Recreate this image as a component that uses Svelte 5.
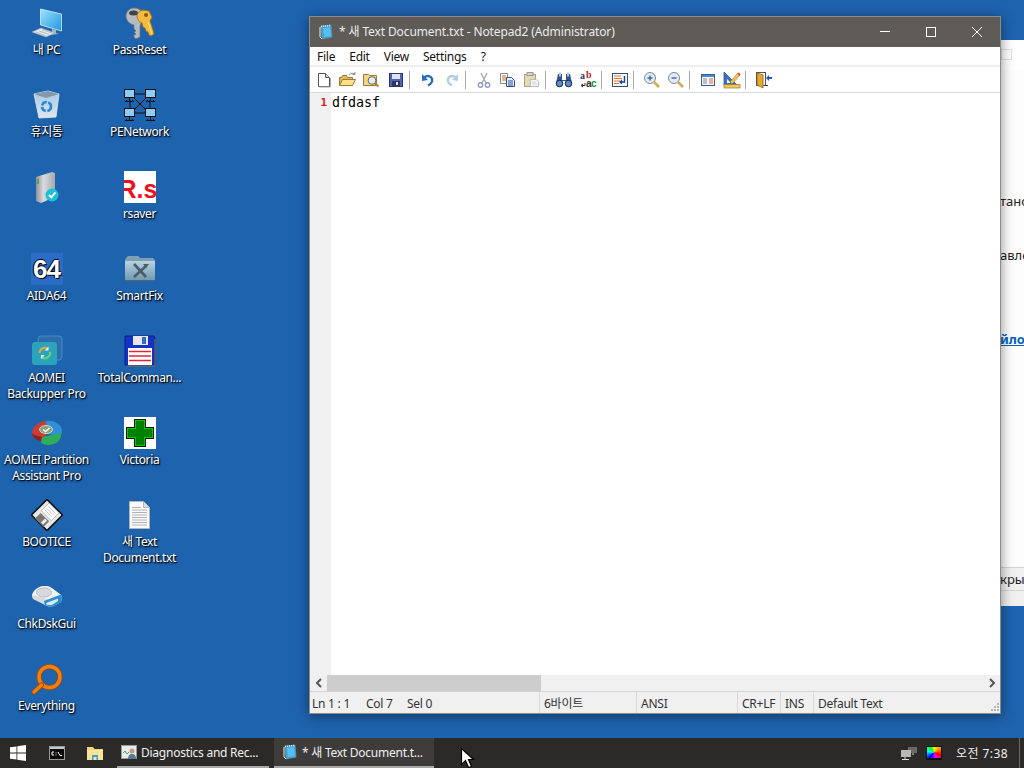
<script>
  const desktopItems = [
    { label: '내 PC', icon: pcIcon },
    { label: '휴지통', icon: binIcon },
    { label: '', icon: serverIcon },
    { label: 'AIDA64', icon: aidaIcon },
    { label: 'AOMEI Backupper Pro', icon: backupperIcon },
    { label: 'AOMEI Partition Assistant Pro', icon: partitionIcon },
    { label: 'BOOTICE', icon: booticeIcon },
    { label: 'ChkDskGui', icon: chkdskIcon },
    { label: 'Everything', icon: everythingIcon },
    { label: 'PassReset', icon: keysIcon },
    { label: 'PENetwork', icon: networkIcon },
    { label: 'rsaver', icon: rsaverIcon },
    { label: 'SmartFix', icon: smartfixIcon },
    { label: 'TotalComman...', icon: totalcmdIcon },
    { label: 'Victoria', icon: victoriaIcon },
    { label: '새 Text Document.txt', icon: textfileIcon }
  ];

  const menu = ['File', 'Edit', 'View', 'Settings', '?'];

  const toolbar = [
    [tbNew, tbOpen, tbBrowse, tbSave],
    [tbUndo, tbRedo],
    [tbCut, tbCopy, tbPaste],
    [tbFind, tbReplace],
    [tbWrap],
    [tbZoomIn, tbZoomOut],
    [tbScheme, tbRuler],
    [tbExit]
  ];

  const statusCells = [
    { text: '6바이트', width: 97 },
    { text: 'ANSI', width: 101 },
    { text: 'CR+LF', width: 43 },
    { text: 'INS', width: 33 }
  ];
</script>

{#snippet pcIcon()}
  <svg viewBox="0 0 32 32" width="32" height="32">
    <defs><linearGradient id="pcs" x1="0" y1="0" x2="1" y2="1"><stop offset="0" stop-color="#9be2fb"/><stop offset="1" stop-color="#1f97e2"/></linearGradient></defs>
    <polygon points="9.500,2 30.500,7 30.500,24 9.500,18" fill="url(#pcs)" stroke="#d8ecf6" stroke-width=".8"/>
    <polygon points="21,22 25,23 25,26 28,27 18,28 21,26" fill="#aab4bb"/>
    <polygon points="1,25 10,21 24,26 15,30" fill="#e2e6e9" stroke="#9aa5ac" stroke-width=".6"/>
    <path d="M5 25l10 4M8 24l10 3.500M11 22.500l10 3.500" stroke="#a8b2b8" stroke-width=".7"/>
  </svg>
{/snippet}

{#snippet binIcon()}
  <svg viewBox="0 0 32 32" width="32" height="32">
    <defs><linearGradient id="bin" x1="0" y1="0" x2="0" y2="1"><stop offset="0" stop-color="#a5c8e6"/><stop offset="1" stop-color="#dfe6ea"/></linearGradient></defs>
    <polygon points="3,5 17,2 28,5 25,28 8,29" fill="url(#bin)" stroke="#e6eef3" stroke-width=".8"/>
    <polygon points="3,5 17,2 28,5 15,9" fill="#8498a9"/>
    <circle cx="15.500" cy="17.500" r="4.500" fill="none" stroke="#2688d8" stroke-width="2.600" stroke-dasharray="6 1.500"/>
  </svg>
{/snippet}

{#snippet serverIcon()}
  <svg viewBox="0 0 32 32" width="32" height="32">
    <defs><linearGradient id="srv" x1="0" y1="0" x2="1" y2="0"><stop offset="0" stop-color="#8d9296"/><stop offset=".4" stop-color="#d9dcde"/><stop offset="1" stop-color="#a3a8ab"/></linearGradient></defs>
    <polygon points="5,6 21,1 24,2 24,26 10,32 5,30" fill="url(#srv)"/>
    <rect x="6" y="8" width="2" height="5" fill="#56a04a"/>
    <circle cx="21" cy="24" r="6.500" fill="#1ec0d8"/>
    <path d="M18 24l2.400 2.400 4-5" fill="none" stroke="#fff" stroke-width="1.800"/>
  </svg>
{/snippet}

{#snippet aidaIcon()}
  <span class="aida">64</span>
{/snippet}

{#snippet backupperIcon()}
  <svg viewBox="0 0 32 32" width="32" height="32">
    <rect x="7" y="1" width="24" height="24" rx="3" fill="#2f6cab" stroke="#3f90c8"/>
    <rect x="1" y="7" width="25" height="23" rx="3" fill="#2aa3bd"/>
    <path d="M8.500 18a5.500 5.500 0 0 1 9-4" fill="none" stroke="#eda63b" stroke-width="2"/>
    <path d="M19 17a5.500 5.500 0 0 1-9 5" fill="none" stroke="#6fd07a" stroke-width="2"/>
    <path d="M17.500 11.500v4h-4zM10 24v-4h4z" fill="#d8f2ea"/>
  </svg>
{/snippet}

{#snippet partitionIcon()}
  <svg viewBox="0 0 32 32" width="32" height="32">
    <path d="M1 16C1 10 7 5 15 4l1 13-6 7C5 23 1 20 1 16z" fill="#cf3a35"/>
    <path d="M1 16c0 4 4 7 9 8l1-4C6 19 2 18 1 16z" fill="#8e1f1c"/>
    <path d="M15 4c9-1 16 4 16 10 0 2-1 4-2 5l-13-2z" fill="#2f8fd8"/>
    <path d="M11 20l19-4c1 7-5 12-13 12-3 0-5-1-7-2z" fill="#2fae5a"/>
    <ellipse cx="15" cy="12.500" rx="6.500" ry="4" fill="#86a078" stroke="#cfdcc2"/>
    <path d="M12 12.500l2.500 2 4-3.500" fill="none" stroke="#fff" stroke-width="1.500"/>
  </svg>
{/snippet}

{#snippet booticeIcon()}
  <svg viewBox="0 0 32 32" width="32" height="32">
    <g transform="rotate(45 16 16)">
      <rect x="5" y="5" width="22" height="22" rx="1" fill="#e8e8e8" stroke="#111" stroke-width="1.600"/>
      <rect x="9" y="6" width="14" height="11" fill="#fff" stroke="#999" stroke-width=".6"/>
      <path d="M11 9h10M11 11.500h10M11 14h10" stroke="#b8b8b8" stroke-width=".8"/>
      <rect x="10" y="19" width="12" height="8" fill="#777"/>
      <rect x="17" y="20" width="3" height="5.500" fill="#eee"/>
    </g>
  </svg>
{/snippet}

{#snippet chkdskIcon()}
  <svg viewBox="0 0 32 32" width="32" height="32">
    <path d="M1 14C3 8 9 5 14 5c3 0 6 1 8 3l8 6c1 1 1 2 1 3l-1 4-9 5c-2 0-5-1-7-2L2 18c-1-1-1-3-1-4z" fill="#d6dade"/>
    <path d="M1 14C3 8 9 5 14 5c3 0 6 1 8 3l8 6-10 5z" fill="#f0f2f4"/>
    <ellipse cx="13" cy="11.500" rx="7.500" ry="4.500" fill="#d6dadf" stroke="#b6bcc2"/>
    <polygon points="13,20 30,13.500 31,17 30,21 21,26 14,24" fill="#2a8ed0"/>
    <polygon points="15,22 27,17.500 27,20 21,24 16,24" fill="#d6e8f4"/>
  </svg>
{/snippet}

{#snippet everythingIcon()}
  <svg viewBox="0 0 32 32" width="32" height="32">
    <circle cx="18.500" cy="14" r="10.500" fill="none" stroke="#a84a00" stroke-width="5"/>
    <circle cx="18.500" cy="14" r="10.500" fill="none" stroke="#f57f0c" stroke-width="3.400"/>
    <path d="M10.500 22L3 29" stroke="#a84a00" stroke-width="5" stroke-linecap="round"/>
    <path d="M10.500 22L3 29" stroke="#f57f0c" stroke-width="3.200" stroke-linecap="round"/>
  </svg>
{/snippet}

{#snippet keysIcon()}
  <svg viewBox="0 0 32 32" width="32" height="32">
    <path d="M10 1c6 0 10 4 9 10-1 4-3 6-3 9v10l-4 2-2-2v-2l2-1-2-2 2-1-2-2v-4C5 17 2 13 2 9c0-5 4-8 8-8z" fill="#b4babe" stroke="#6d7378" stroke-width=".8"/>
    <ellipse cx="9.500" cy="6" rx="4.500" ry="2.500" fill="#3e4448"/>
    <path d="M19 3l6 1 3 6-2 4 3 9 1 4-3 2-2-1-1-3-2-1-1-3-2-1-1-4c-3-1-5-4-5-7 1-4 4-6 7-6z" fill="#f5bb3e" stroke="#a86c12" stroke-width=".8"/>
    <circle cx="22" cy="8" r="2" fill="#8a5a10"/>
    <path d="M24 15l4 12" stroke="#fde08a" stroke-width="1"/>
  </svg>
{/snippet}

{#snippet networkIcon()}
  <svg viewBox="0 0 32 32" width="32" height="32">
    <path d="M10 5h12M10 24h12M6 11v8M26 11v8M10 9l12 12M22 9L10 21" stroke="#111" stroke-width="1"/>
    {#each [[0, 0], [21, 0], [0, 19], [21, 19]] as [x, y]}
      <g transform="translate({x} {y})">
        <rect x=".5" y=".5" width="10" height="8" fill="#8ecbf5" stroke="#111"/>
        <path d="M5.500 9v3M1 12.500h9" stroke="#111"/>
        <path d="M2 11h1v1H2zM8 11h1v1H8z" fill="#111"/>
      </g>
    {/each}
  </svg>
{/snippet}

{#snippet rsaverIcon()}
  <span class="rs"><b>R.s</b></span>
{/snippet}

{#snippet smartfixIcon()}
  <svg viewBox="0 0 32 32" width="32" height="32">
    <defs><linearGradient id="sf" x1="0" y1="0" x2="0" y2="1"><stop offset="0" stop-color="#b8d2e0"/><stop offset="1" stop-color="#6f98ae"/></linearGradient></defs>
    <path d="M2 5l2-2h10l2 2h13l2 2v20l-1 1H2l-1-1V7z" fill="#7fa0b2"/>
    <rect x="1" y="8" width="30" height="20" rx="1" fill="url(#sf)"/>
    <path d="M10 11l12 13" stroke="#4b5e6a" stroke-width="2.600"/>
    <path d="M22 13L10 24" stroke="#4b5e6a" stroke-width="2.600"/>
    <path d="M19 11h6l-3 4z" fill="#4b5e6a"/>
    <rect x="1" y="27" width="30" height="1.500" fill="#46687c"/>
  </svg>
{/snippet}

{#snippet totalcmdIcon()}
  <svg viewBox="0 0 32 32" width="32" height="32">
    <path d="M1 1h29l1 2v27H1z" fill="#1432c8" stroke="#0c1e86"/>
    <rect x="9" y="1" width="15" height="9" fill="#e8e8e8"/>
    <rect x="18" y="2" width="4" height="7" fill="#3a6ac8"/>
    <rect x="4" y="13" width="24" height="17" fill="#fff"/>
    <path d="M5 16.500h22M5 21h22M5 25.500h22" stroke="#e0263a" stroke-width="1.300"/>
    <path d="M31 4v27H3" fill="none" stroke="#8b6a50" stroke-width="1"/>
  </svg>
{/snippet}

{#snippet victoriaIcon()}
  <svg viewBox="0 0 32 32" width="32" height="32">
    <rect width="32" height="32" fill="#fff"/>
    <polygon points="10,2 22,2 22,10 30,10 30,22 22,22 22,30 10,30 10,22 2,22 2,10 10,10" fill="#111"/>
    <polygon points="11,3 21,3 21,11 29,11 29,21 21,21 21,29 11,29 11,21 3,21 3,11 11,11" fill="#00d000"/>
    <polygon points="12,4 20,4 20,12 28,12 28,20 20,20 20,28 12,28 12,20 4,20 4,12 12,12" fill="#008000"/>
  </svg>
{/snippet}

{#snippet textfileIcon()}
  <svg viewBox="0 0 32 32" width="32" height="32">
    <path d="M5.500 2.500h14l6 6v21h-20z" fill="#fbfbfb" stroke="#b5b5b5"/>
    <path d="M19.500 2.500v6h6" fill="#ddd" stroke="#b5b5b5"/>
    <path d="M8 8.500h9M8 11h15M8 13.500h15M8 16h15M8 18.500h15M8 21h15M8 23.500h15M8 26h15" stroke="#b0b0b0"/>
  </svg>
{/snippet}

{#snippet notepadGlyph()}
  <svg viewBox="0 0 16 16" width="16" height="16">
    <polygon points="3,2 13,1 14,13 4,15" fill="#3ea3dc" stroke="#6d99b5" stroke-width=".7"/>
    <polygon points="5,4 12,3.300 13,12 6,13" fill="#55c0ee"/>
    <path d="M3 2.500l9-1" stroke="#e8eef2" stroke-width="1.400" stroke-dasharray="1 1"/>
    <path d="M2 3v10l2 2" fill="none" stroke="#e6f0d0" stroke-width="1"/>
  </svg>
{/snippet}

{#snippet tbNew()}
  <svg viewBox="0 0 18 18"><path d="M3.500 2.500h7l4 4v9h-11z" fill="#fff" stroke="#555"/><path d="M10.500 2.500v4h4" fill="#cfd8e0" stroke="#555"/><path d="M15.500 7v9h-11" fill="none" stroke="#aaa"/></svg>
{/snippet}
{#snippet tbOpen()}
  <svg viewBox="0 0 18 18"><path d="M.5 6.500h2l1-2h4l1 2h5v8H.5z" fill="#e0b860" stroke="#a07c30"/><path d="M.5 14.500l3-6h13l-3 6z" fill="#f9e08e" stroke="#a07c30"/><path d="M10 4c2-2 4-2 6-1M16 1v2.500h-2.500" fill="none" stroke="#8a8a8a"/></svg>
{/snippet}
{#snippet tbBrowse()}
  <svg viewBox="0 0 18 18"><path d="M.5 3.500h5l1 1h7v10H.5z" fill="#f0d488" stroke="#a07c30"/><circle cx="9" cy="9.500" r="3.800" fill="#e4f0f8" stroke="#666"/><path d="M12 12.500l3.500 3" stroke="#c87818" stroke-width="2"/></svg>
{/snippet}
{#snippet tbSave()}
  <svg viewBox="0 0 18 18"><rect x="2.500" y="2.500" width="13" height="13" fill="#5262b0" stroke="#2b3772"/><rect x="5" y="3" width="8" height="5" fill="#dfe4f6"/><rect x="5" y="10" width="8" height="5" fill="#30375c"/><rect x="9" y="11" width="2" height="3" fill="#ddd"/></svg>
{/snippet}
{#snippet tbUndo()}
  <svg viewBox="0 0 18 18"><path d="M5 6.500c4-3 9-1 8 4-.5 2-2 3-4 4" fill="none" stroke="#2a6cc0" stroke-width="2.400"/><polygon points="3,3 3,10 9,9" fill="#2a6cc0"/></svg>
{/snippet}
{#snippet tbRedo()}
  <svg viewBox="0 0 18 18"><path d="M13 6.500c-4-3-9-1-8 4 .5 2 2 3 4 4" fill="none" stroke="#b4cbe2" stroke-width="2.400"/><polygon points="15,3 15,10 9,9" fill="#b4cbe2"/></svg>
{/snippet}
{#snippet tbCut()}
  <svg viewBox="0 0 18 18"><path d="M6 2l5 10M12 2L7 12" stroke="#a8adb4" stroke-width="1.400"/><circle cx="5.500" cy="14" r="2.200" fill="none" stroke="#8e9fc4" stroke-width="1.400"/><circle cx="12.500" cy="14" r="2.200" fill="none" stroke="#8e9fc4" stroke-width="1.400"/></svg>
{/snippet}
{#snippet tbCopy()}
  <svg viewBox="0 0 18 18"><path d="M1.500 2.500h7v10h-7z" fill="#fff" stroke="#8a8a8a"/><path d="M3 5h4M3 7h4M3 9h4" stroke="#d8652a"/><path d="M7.500 6.500h5l3 3v6h-8z" fill="#eaf2fb" stroke="#2a4f96"/><path d="M9 10h5M9 12h5M9 14h5" stroke="#2a4f96"/></svg>
{/snippet}
{#snippet tbPaste()}
  <svg viewBox="0 0 18 18"><rect x="1.500" y="3.500" width="11" height="12" fill="#e6d8b6" stroke="#b0a284"/><rect x="4" y="1.500" width="6" height="3" fill="#d4d4d4" stroke="#9a9a9a"/><path d="M7.500 8.500h6l2 2v5h-8z" fill="#f6f6f6" stroke="#bbb"/><path d="M9 11h4M9 13h5" stroke="#d4d4d4"/></svg>
{/snippet}
{#snippet tbFind()}
  <svg viewBox="0 0 18 18"><path d="M3 3h4v6h4V3h4l2 9h-6v-2H7v2H1z" fill="#34568e"/><circle cx="4.500" cy="12.500" r="3.300" fill="#5a8cc8" stroke="#16294d"/><circle cx="13.500" cy="12.500" r="3.300" fill="#5a8cc8" stroke="#16294d"/><rect x="4" y="1.500" width="2" height="4" fill="#b8c4dc"/><rect x="12" y="1.500" width="2" height="4" fill="#b8c4dc"/></svg>
{/snippet}
{#snippet tbReplace()}
  <span class="ab">
    <i class="a">a</i><i class="b">b</i><i class="c1">a</i><i class="c2">c</i>
    <svg viewBox="0 0 6 6"><path d="M5 1v2.500H1.500M3 2L1 3.500 3 5" fill="none" stroke="#333"/></svg>
  </span>
{/snippet}
{#snippet tbWrap()}
  <svg viewBox="0 0 18 18"><rect x="1.500" y="2.500" width="15" height="13" fill="#f6f8fc" stroke="#33507e"/><path d="M3 5h7M3 7.500h8M3 10h6M3 12.500h5" stroke="#e07a28"/><path d="M13.500 5v6h-4" fill="none" stroke="#1c3f9e" stroke-width="1.400"/><polygon points="11,8.500 11,13.500 8,11" fill="#1c3f9e"/></svg>
{/snippet}
{#snippet tbZoomIn()}
  <svg viewBox="0 0 18 18"><circle cx="7" cy="7" r="5.500" fill="#e2ecf4" stroke="#7c8a98"/><path d="M4.500 7h5M7 4.500v5" stroke="#3b68a8" stroke-width="1.400"/><path d="M11 11l5 5" stroke="#d2ac52" stroke-width="2.600"/></svg>
{/snippet}
{#snippet tbZoomOut()}
  <svg viewBox="0 0 18 18"><circle cx="7" cy="7" r="5.500" fill="#e2ecf4" stroke="#7c8a98"/><path d="M4.500 7h5" stroke="#3b68a8" stroke-width="1.400"/><path d="M11 11l5 5" stroke="#d2ac52" stroke-width="2.600"/></svg>
{/snippet}
{#snippet tbScheme()}
  <svg viewBox="0 0 18 18"><rect x="2.500" y="3.500" width="13" height="11" fill="#f4f8fc" stroke="#3c5c90"/><rect x="3" y="4" width="12" height="2" fill="#4f8ad0"/><path d="M4 8h4M4 10h4M4 12h4" stroke="#7a8aa0"/><path d="M10 8h4M10 10h4M10 12h4" stroke="#e06a30"/></svg>
{/snippet}
{#snippet tbRuler()}
  <svg viewBox="0 0 18 18"><polygon points="1,1 1,14 14,14" fill="#3d6fc4" stroke="#24467e" stroke-width=".7"/><polygon points="4,8 4,12 8,12" fill="#fff"/><rect x="1" y="13.500" width="16" height="3.500" fill="#eec858" stroke="#9a7a28" stroke-width=".7"/><path d="M7 11L15 2l2 2-8 9z" fill="#f2c84a" stroke="#9a6a18" stroke-width=".6"/><path d="M15 2l2 2" stroke="#d83a2a" stroke-width="1.600"/></svg>
{/snippet}
{#snippet tbExit()}
  <svg viewBox="0 0 18 18"><rect x="1.500" y="1.500" width="9" height="13" fill="#f0f0f0" stroke="#555"/><polygon points="2,2 8,4 8,17 2,14" fill="#e8a82a" stroke="#8a5a10" stroke-width=".7"/><path d="M10 14.500h3" stroke="#333"/><polygon points="11,7 14,4 14,6 17,6 17,8 14,8 14,10" fill="#1e58c0"/></svg>
{/snippet}

<div class="desktop">
  <main class="desk">
    {#each desktopItems as item}
      <div class="item">
        <div class="glyph">{@render item.icon()}</div>
        <span class="label">{item.label}</span>
      </div>
    {/each}

    <section class="backwin">
      <div class="bw-head"><span class="bw-box"></span></div>
      <div class="bw-body">
        <span class="bw-text t1">тано</span>
        <span class="bw-text t2">авле</span>
        <span class="bw-text t3">йло</span>
      </div>
      <div class="bw-row"><span>кры</span></div>
      <div class="bw-foot"></div>
    </section>

    <section class="notepad">
      <header class="titlebar">
        <span class="title-icon">{@render notepadGlyph()}</span>
        <span class="title-text">* 새 Text Document.txt - Notepad2 (Administrator)</span>
        <div class="caption">
          <button aria-label="Minimize"><svg width="12" height="12" viewBox="0 0 12 12"><path d="M1 5.500h10" stroke="#fff"/></svg></button>
          <button aria-label="Maximize"><svg width="12" height="12" viewBox="0 0 12 12"><rect x="1.500" y="1.500" width="9" height="9" fill="none" stroke="#fff"/></svg></button>
          <button aria-label="Close"><svg width="12" height="12" viewBox="0 0 12 12"><path d="M1 1l10 10M11 1L1 11" stroke="#fff"/></svg></button>
        </div>
      </header>

      <nav class="menubar">
        {#each menu as m}<span>{m}</span>{/each}
      </nav>

      <div class="toolbar">
        {#each toolbar as group, i}
          {#if i > 0}<span class="sep"></span>{/if}
          {#each group as tool}
            <span class="tool">{@render tool()}</span>
          {/each}
        {/each}
      </div>

      <div class="editor">
        <div class="gutter">1</div>
        <div class="code">dfdasf</div>
      </div>

      <div class="hscroll">
        <span class="arrow"><svg width="8" height="10" viewBox="0 0 8 10"><path d="M6 1L2 5l4 4" fill="none" stroke="#555" stroke-width="2"/></svg></span>
        <span class="thumb"></span>
        <span class="arrow right"><svg width="8" height="10" viewBox="0 0 8 10"><path d="M2 1l4 4-4 4" fill="none" stroke="#555" stroke-width="2"/></svg></span>
      </div>

      <footer class="statusbar">
        <div class="cell first"><span>Ln 1 : 1</span><span>Col 7</span><span>Sel 0</span></div>
        {#each statusCells as cell}
          <div class="cell" style="width: {cell.width}px">{cell.text}</div>
        {/each}
        <div class="cell last">Default Text</div>
        <svg class="grip" width="11" height="11" viewBox="0 0 11 11">
          <path d="M8 1h2v2H8zM5 4h2v2H5zM8 4h2v2H8zM2 7h2v2H2zM5 7h2v2H5zM8 7h2v2H8z" fill="#b5b5b5"/>
        </svg>
      </footer>
    </section>
  </main>

  <footer class="taskbar">
    <span class="tb-btn start">
      <svg width="16" height="16" viewBox="0 0 16 16"><path d="M0 2.300l6.500-.9v6.200H0zM7.300 1.300L16 0v7.600H7.300zM0 8.400h6.500v6.200L0 13.700zM7.300 8.400H16V16l-8.700-1.300z" fill="#fff"/></svg>
    </span>
    <span class="tb-btn">
      <svg width="16" height="14" viewBox="0 0 16 14"><rect x=".5" y=".5" width="15" height="13" fill="#0c0c0c" stroke="#9a9a9a"/><rect x="1" y="1" width="14" height="2" fill="#c8c8c8"/><path d="M3 6H5M3 6v3M3 9h2M7 6.500v.8M7 8.500v.8M9 6l2 3.500h2" fill="none" stroke="#fff"/></svg>
    </span>
    <span class="tb-btn narrow">
      <svg width="16" height="14" viewBox="0 0 16 14"><path d="M0 1h6l1.500 2H16v11H0z" fill="#f5d77c"/><rect x="0" y="4" width="16" height="10" fill="#fbe39a"/><path d="M5 14V9h6v5H9.500v-3h-3v3z" fill="#3a9ed8"/></svg>
    </span>
    <div class="task">
      <svg width="16" height="16" viewBox="0 0 16 16"><rect x=".5" y="1.500" width="15" height="13" fill="#e8ecef" stroke="#9a9a9a"/><path d="M2 9l2-2 2 3 2-2" fill="none" stroke="#3fae4a"/><circle cx="11" cy="7" r="2.500" fill="#c89878"/><path d="M7 15c0-4 2-5 4-5s4 1 4 5z" fill="#5a7a98"/></svg>
      <span>Diagnostics and Rec...</span>
    </div>
    <div class="task active">
      {@render notepadGlyph()}
      <span>* 새 Text Document.t...</span>
    </div>
    <div class="tray">
      <svg width="16" height="14" viewBox="0 0 16 14"><rect x="7" y="1" width="9" height="6" fill="#6a6a6a"/><rect x="0" y="4" width="10" height="7" fill="#b8b8b8"/><path d="M4 11v2M1 13.500h7M12 7v2" stroke="#ddd"/></svg>
      <span class="monitor"><span class="rainbow"></span></span>
      <span class="clock">오전 7:38</span>
      <span class="show-desktop"></span>
    </div>
  </footer>

  <svg class="cursor" width="14" height="22" viewBox="0 0 14 22">
    <path d="M.5 .5v16l4-4 3 7 3-1-3-7h5z" fill="#fff" stroke="#000" stroke-width="1.200"/>
  </svg>
</div>

<style>
  :global(body) {
    margin: 0;
    background: #1e63ae;
  }

  .desktop {
    position: relative;
    width: 1024px;
    height: 768px;
    overflow: hidden;
    display: flex;
    flex-direction: column;
    font-family: "Noto Sans", "Noto Sans CJK KR", sans-serif;
    font-size: 12px;
    letter-spacing: -0.25px;
    background: #1e63ae;
  }

  .desk {
    position: relative;
    flex: 1;
    display: grid;
    grid-auto-flow: column;
    grid-template-rows: repeat(9, 82px);
    grid-template-columns: repeat(2, 93px);
    justify-content: start;
  }

  .item {
    display: flex;
    flex-direction: column;
    align-items: center;
    padding-top: 7px;
    box-sizing: border-box;
  }

  .glyph {
    width: 32px;
    height: 32px;
    flex: none;
  }

  .glyph svg {
    display: block;
  }

  .label {
    margin-top: 3px;
    width: 92px;
    text-align: center;
    line-height: 15.5px;
    letter-spacing: -0.35px;
    color: #fff;
    text-shadow: 1px 1px 1px #000, 0 1px 3px #01142e;
  }

  .aida {
    display: block;
    width: 32px;
    height: 32px;
    background: #2a6cc6;
    color: #fff;
    font: 700 26px/32px "Liberation Sans", sans-serif;
    text-align: center;
    letter-spacing: -1px;
    text-shadow: 1px 1px 0 #000, -1px 0 0 #000, 0 -1px 0 #000;
  }

  .rs {
    display: block;
    width: 32px;
    height: 32px;
    background: #fff;
    overflow: hidden;
    position: relative;
  }

  .rs b {
    position: absolute;
    left: -5px;
    top: 4px;
    color: #f0101c;
    letter-spacing: 0;
    font: 700 25px/28px "Liberation Sans", sans-serif;
  }

  .backwin {
    position: absolute;
    left: 1000px;
    top: 40px;
    width: 24px;
    height: 566px;
    background: #f3f3f3;
    display: flex;
    flex-direction: column;
    overflow: hidden;
    color: #222;
    font: 13px/16px "Noto Sans", sans-serif;
    letter-spacing: 0;
  }

  .bw-head {
    height: 30px;
    background: #fff;
    flex: none;
  }

  .bw-box {
    display: block;
    width: 9px;
    height: 9px;
    margin: 9px 0 0 1px;
    border: 1px solid #e2e2e2;
  }

  .bw-body {
    position: relative;
    flex: 1;
    background: #fdfdfd;
  }

  .bw-text {
    position: absolute;
    left: 0;
    white-space: nowrap;
  }

  .t1 { top: 123px; }
  .t2 { top: 177px; }
  .t3 {
    top: 261px;
    color: #0563c1;
    font-weight: 700;
    text-decoration: underline;
  }

  .bw-row {
    height: 22px;
    flex: none;
    border-top: 1px solid #d4d4d4;
    border-bottom: 1px solid #d4d4d4;
    background: #f0f0f0;
    display: flex;
    align-items: center;
    white-space: nowrap;
  }

  .bw-foot {
    height: 15px;
    flex: none;
    background: #f0f0f0;
  }

  .notepad {
    position: absolute;
    left: 309px;
    top: 16px;
    width: 692px;
    height: 698px;
    box-sizing: border-box;
    border: 1px solid #8c8c8c;
    background: #fff;
    display: flex;
    flex-direction: column;
    box-shadow: 0 2px 12px rgba(0, 0, 0, 0.45);
    color: #111;
  }

  .titlebar {
    height: 30px;
    flex: none;
    display: flex;
    align-items: center;
    padding-left: 8px;
    background: #5f5b57;
    color: #ececec;
  }

  .title-icon {
    width: 16px;
    height: 16px;
    margin-right: 5px;
  }

  .title-icon svg {
    display: block;
  }

  .title-text {
    flex: 1;
    letter-spacing: -0.12px;
    padding-bottom: 2px;
  }

  .caption {
    display: flex;
    height: 100%;
  }

  .caption button {
    width: 46px;
    padding: 0;
    border: 0;
    background: none;
    display: flex;
    align-items: center;
    justify-content: center;
  }

  .menubar {
    height: 18px;
    flex: none;
    display: flex;
    gap: 14px;
    align-items: center;
    padding-left: 7px;
    background: #fff;
  }

  .toolbar {
    height: 25px;
    flex: none;
    display: flex;
    align-items: center;
    padding-left: 2px;
    border-top: 2px solid #f0f0f0;
    border-bottom: 1px solid #d9d9d9;
  }

  .tool {
    width: 24px;
    height: 18px;
    display: flex;
    justify-content: center;
  }

  .tool :global(svg) {
    width: 18px;
    height: 18px;
  }

  .sep {
    width: 8px;
    height: 18px;
    box-sizing: border-box;
    position: relative;
  }

  .sep::after {
    content: "";
    position: absolute;
    left: 1px;
    top: 0;
    bottom: 0;
    width: 1px;
    background: #a6a6a6;
  }

  .ab {
    position: relative;
    width: 18px;
    height: 18px;
    font: 700 10px/10px "Liberation Serif", serif;
    letter-spacing: 0;
  }

  .ab i {
    position: absolute;
    font-style: normal;
  }

  .ab :global(svg) {
    position: absolute;
    left: 1px;
    top: 11px;
    width: 6px;
    height: 6px;
  }

  .a { left: 1px; top: 0; color: #2a3a6a; }
  .b { left: 7px; top: -1px; color: #c81818; }
  .c1 { left: 7px; top: 8px; color: #333; font-family: "Liberation Sans", sans-serif; }
  .c2 { left: 12px; top: 8px; color: #1a8a2a; font-family: "Liberation Sans", sans-serif; }

  .editor {
    flex: 1;
    display: flex;
    min-height: 0;
  }

  .gutter {
    width: 21px;
    box-sizing: border-box;
    background: #f0f0f0;
    text-align: right;
    padding: 2px 4px 0 0;
    color: #e01818;
    font: 700 11px/16px "DejaVu Sans Mono", monospace;
    letter-spacing: 0;
  }

  .code {
    flex: 1;
    padding: 2px 0 0 1px;
    font: 13.33px/16px "DejaVu Sans Mono", monospace;
    letter-spacing: 0;
    color: #000;
  }

  .hscroll {
    height: 16px;
    flex: none;
    display: flex;
    background: #f0f0f0;
  }

  .arrow {
    width: 17px;
    display: flex;
    align-items: center;
    justify-content: center;
  }

  .arrow.right {
    margin-left: auto;
  }

  .thumb {
    width: 214px;
    background: #cdcdcd;
  }

  .statusbar {
    height: 22px;
    flex: none;
    display: flex;
    position: relative;
    border-top: 1px solid #d4d4d4;
    background: #f0f0f0;
    box-sizing: border-box;
    color: #333;
  }

  .cell {
    box-sizing: border-box;
    height: 100%;
    line-height: 23px;
    padding-left: 4px;
    border-right: 1px solid #dadada;
    white-space: nowrap;
  }

  .cell.first {
    width: 230px;
    padding-left: 2px;
    display: grid;
    grid-template-columns: 54px 41px auto;
  }

  .cell.last {
    flex: 1;
    border-right: 0;
  }

  .grip {
    position: absolute;
    right: 0;
    bottom: 0;
  }

  .taskbar {
    height: 30px;
    flex: none;
    display: flex;
    align-items: stretch;
    background: #2b2a29;
    color: #f0f0f0;
  }

  .tb-btn {
    width: 38px;
    display: flex;
    align-items: center;
    justify-content: center;
  }

  .tb-btn.start {
    padding-right: 2px;
    box-sizing: border-box;
  }

  .tb-btn.narrow {
    width: 37px;
    margin-right: 4px;
  }

  .task {
    width: 152px;
    box-sizing: border-box;
    display: flex;
    align-items: center;
    gap: 4px;
    padding-left: 4px;
    border-bottom: 2px solid #a8a8a8;
    white-space: nowrap;
    overflow: hidden;
  }

  .task.active {
    width: 160px;
    margin-left: 5px;
    padding-left: 8px;
    gap: 4px;
    background: #3d3c3b;
  }

  .tray {
    margin-left: auto;
    display: flex;
    align-items: center;
  }

  .tray svg:first-child {
    margin-right: 9px;
  }

  .monitor {
    width: 16px;
    height: 14px;
    box-sizing: border-box;
    padding: 1px 1px 2px;
    background: #111;
    display: block;
  }

  .rainbow {
    display: block;
    height: 100%;
    background: conic-gradient(#ff0 0deg, #f80 60deg, #f00 110deg, #f0f 160deg, #00f 220deg, #0ff 280deg, #0f0 330deg, #ff0 360deg);
  }

  .clock {
    margin-left: 14px;
    width: 63px;
    letter-spacing: 0.45px;
  }

  .show-desktop {
    width: 1px;
    height: 100%;
    background: #6a6a6a;
    margin-right: 4px;
  }

  .cursor {
    position: absolute;
    left: 461px;
    top: 748px;
  }
</style>
